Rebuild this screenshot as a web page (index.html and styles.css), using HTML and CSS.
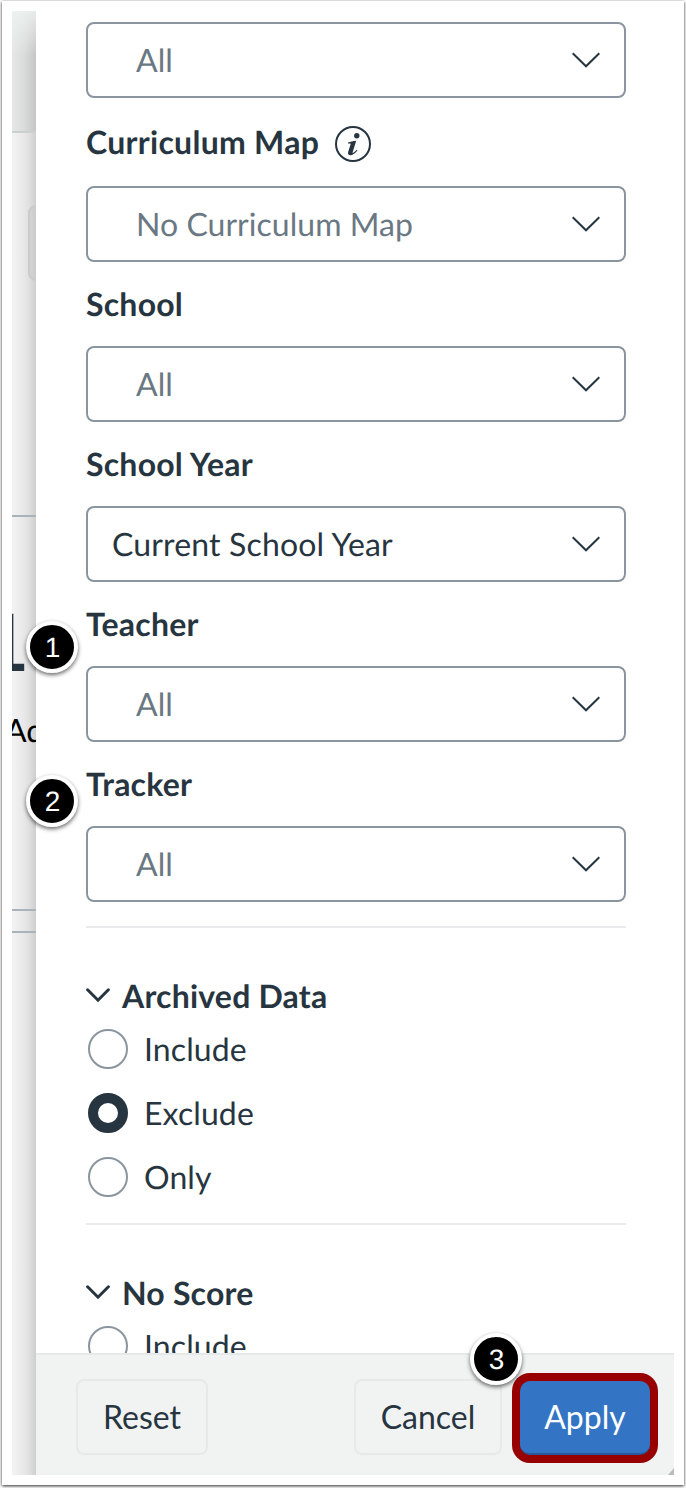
FILE: index.html
```html
<!DOCTYPE html>
<html lang="en">
<head>
    <meta charset="UTF-8">
    <meta name="viewport" content="width=device-width, initial-scale=1.0">
    <title>Filters</title>
    <link rel="stylesheet" href="styles.css">
</head>
<body>
    <div class="frame">
        <!-- Page behind the tray -->
        <div class="page">
            <div class="page-header"></div>
            <div class="page-button"></div>
            <div class="page-line line-top"></div>
            <div class="page-count">1</div>
            <div class="page-text">Ad</div>
            <div class="page-line line-card"></div>
            <div class="page-line line-next"></div>
        </div>

        <form class="tray" onsubmit="return false;">
            <div class="tray-content">
                <div class="select">
                    <span class="placeholder">All</span>
                    <svg class="arrow" viewBox="0 0 28 16"><path d="M0.7 1.2L14 14.3L27.3 1.2"/></svg>
                </div>

                <div class="label label-info">
                    Curriculum Map
                    <svg class="info" viewBox="0 0 36 36">
                        <circle cx="18" cy="18" r="17"/>
                        <circle class="dot" cx="21.8" cy="9.7" r="2.7"/>
                        <path d="M13 16.6C15.5 15.6 18 15 21.2 14.7L17.6 26.6C17.4 27.5 18.3 27.4 21.8 23.8L22.4 24.5C19.6 27.8 17.5 29.2 15.4 29.2C13.4 29.2 12.6 27.8 13.2 25.8L15.6 18.2C15.9 17.3 15.2 17.2 13 17.6Z"/>
                    </svg>
                </div>
                <div class="select">
                    <span class="placeholder">No Curriculum Map</span>
                    <svg class="arrow" viewBox="0 0 28 16"><path d="M0.7 1.2L14 14.3L27.3 1.2"/></svg>
                </div>

                <div class="label">School</div>
                <div class="select">
                    <span class="placeholder">All</span>
                    <svg class="arrow" viewBox="0 0 28 16"><path d="M0.7 1.2L14 14.3L27.3 1.2"/></svg>
                </div>

                <div class="label">School Year</div>
                <div class="select">
                    <span class="value">Current School Year</span>
                    <svg class="arrow" viewBox="0 0 28 16"><path d="M0.7 1.2L14 14.3L27.3 1.2"/></svg>
                </div>

                <div class="label">Teacher</div>
                <div class="select">
                    <span class="placeholder">All</span>
                    <svg class="arrow" viewBox="0 0 28 16"><path d="M0.7 1.2L14 14.3L27.3 1.2"/></svg>
                </div>

                <div class="label">Tracker</div>
                <div class="select">
                    <span class="placeholder">All</span>
                    <svg class="arrow" viewBox="0 0 28 16"><path d="M0.7 1.2L14 14.3L27.3 1.2"/></svg>
                </div>

                <div class="group">
                    <div class="group-title">
                        <svg class="toggle" viewBox="0 0 24 16"><path d="M1.6 1.8L12 12.2L22.4 1.8"/></svg>
                        Archived Data
                    </div>
                    <label class="option"><input type="radio" name="archived">Include</label>
                    <label class="option"><input type="radio" name="archived" checked>Exclude</label>
                    <label class="option"><input type="radio" name="archived">Only</label>
                </div>

                <div class="group">
                    <div class="group-title">
                        <svg class="toggle" viewBox="0 0 24 16"><path d="M1.6 1.8L12 12.2L22.4 1.8"/></svg>
                        No Score
                    </div>
                    <label class="option"><input type="radio" name="noscore">Include</label>
                </div>
            </div>

            <div class="tray-footer">
                <button class="btn btn-reset" type="button">Reset</button>
                <button class="btn btn-cancel" type="button">Cancel</button>
                <div class="highlight">
                    <button class="btn-apply" type="submit">Apply</button>
                </div>
                <svg class="corner" viewBox="0 0 6 7"><path d="M6 0L0 7H6Z"/></svg>
            </div>
        </form>
    </div>

    <div class="badge badge-1">1</div>
    <div class="badge badge-2">2</div>
    <div class="badge badge-3">3</div>
</body>
</html>
```

FILE: styles.css
```css
* {
    box-sizing: border-box;
}
body {
    margin: 0;
    padding: 1px 2px 3px;
    height: 1488px;
    overflow: hidden;
    position: relative;
    background-color: #fff;
    font-family: Lato, sans-serif;
    font-size: 32px;
    line-height: 40px;
    color: #273540;
    text-rendering: geometricPrecision;
}
.frame {
    display: flex;
    height: 1484px;
    padding: 10px;
    background-color: #fff;
    box-shadow: 0 1px 3px rgba(0, 0, 0, 0.85);
}

/* Page behind the tray */
.page {
    width: 24px;
    height: 1464px;
    overflow: hidden;
    background: #f3f3f3;
    background: linear-gradient(to right, #f3f3f3 0%, #e8e8e8 50%, #dedede 75%, #cecece 100%);
}
.page-header {
    height: 122px;
    border-bottom: 2px solid #cdd0d0;
    background:
        linear-gradient(to bottom, rgba(240, 244, 243, 0.8), rgba(240, 244, 243, 0) 45px),
        linear-gradient(to right, #e4e8e7 0%, #d9dcdb 50%, #c3c6c5 100%);
}
.page-button {
    width: 40px;
    height: 76px;
    margin: 72px 0 234px 16px;
    border: 2px solid #c9cccc;
    border-radius: 8px;
    background: linear-gradient(to right, #d3d5d5, #c6c8c8 8px);
}
.page-line {
    height: 2px;
    background-color: #abb2bb;
}
.page-count {
    width: 60px;
    height: 80px;
    margin: 84px 0 0 -28px;
    font-size: 77px;
    line-height: 80px;
    -webkit-text-stroke: 2px #273540;
}
.page-text {
    width: 60px;
    margin: 29px 0 0 -7px;
    color: #000;
}
.line-card {
    margin-top: 159px;
}
.line-next {
    margin-top: 20px;
}

/* Tray */
.tray {
    display: flex;
    flex-direction: column;
    width: 638px;
    height: 1464px;
    background-color: #fff;
}
.tray-content {
    flex: 1;
    min-height: 0;
    overflow: hidden;
    padding: 11px 48px 0 50px;
}
.select {
    display: flex;
    align-items: center;
    justify-content: space-between;
    width: 540px;
    height: 76px;
    padding: 0 24px;
    border: 2px solid #8b959f;
    border-radius: 8px;
}
.value {
    letter-spacing: 0.16px;
}
.placeholder {
    padding-left: 24px;
    letter-spacing: 0.04px;
    color: #6a7883;
}
.arrow {
    width: 28px;
    height: 16px;
    margin-bottom: 1px;
    fill: none;
    stroke: #273540;
    stroke-width: 2;
}
.label {
    height: 84px;
    padding-top: 22px;
    font-weight: bold;
    letter-spacing: 0.22px;
}
.label-info {
    display: flex;
    gap: 16px;
    height: 88px;
    padding-top: 24px;
    letter-spacing: 0.28px;
}
.info {
    width: 36px;
    height: 36px;
    margin-top: 4px;
    fill: #273540;
}
.info circle {
    fill: none;
    stroke: #273540;
    stroke-width: 2;
}
.info .dot {
    fill: #273540;
    stroke: none;
}
.group {
    width: 540px;
    margin-top: 24px;
    padding-top: 48px;
    border-top: 2px solid #e8eaec;
}
.group + .group {
    margin-top: 26px;
}
.group-title {
    display: flex;
    align-items: center;
    gap: 12px;
    height: 40px;
    margin-bottom: 13px;
    font-weight: bold;
    letter-spacing: 0.2px;
}
.toggle {
    width: 24px;
    height: 16px;
    fill: none;
    stroke: #273540;
    stroke-width: 3;
    stroke-linecap: round;
}
.option {
    display: flex;
    align-items: center;
    gap: 16px;
    height: 40px;
    margin-left: 2px;
    letter-spacing: 0.1px;
}
.option + .option {
    margin-top: 24px;
}
.option input {
    appearance: none;
    width: 40px;
    height: 40px;
    margin: 0;
    border: 2px solid #8b959f;
    border-radius: 50%;
    background-color: #fff;
}
.option input:checked {
    border: 10px solid #273540;
}

/* Footer */
.tray-footer {
    display: flex;
    align-items: flex-start;
    position: relative;
    height: 122px;
    padding: 18px 16px 0 40px;
    border-top: 2px solid #e6e8e9;
    background-color: #f1f3f3;
}
.btn,
.btn-apply {
    padding: 0 0 1px;
    font-family: inherit;
    font-size: 32px;
}
.btn {
    height: 76px;
    margin-top: 6px;
    border: 2px solid #e7e9e9;
    border-radius: 8px;
    background-color: #f1f3f3;
    color: #273540;
}
.btn-reset {
    width: 132px;
}
.btn-cancel {
    width: 148px;
    margin-left: auto;
}
.highlight {
    width: 146px;
    height: 90px;
    margin-left: 10px;
    padding: 8px;
    border-radius: 18px;
    background-color: #980000;
}
.btn-apply {
    width: 130px;
    height: 74px;
    border: none;
    border-bottom: 2px solid #285b9a;
    border-radius: 10px;
    background-color: #3474c4;
    color: #fff;
}
.corner {
    position: absolute;
    right: 0;
    bottom: 0;
    width: 6px;
    height: 7px;
    fill: #b9bcbc;
}

/* Numbered step markers */
.badge {
    position: absolute;
    width: 52px;
    height: 52px;
    padding-left: 1px;
    border: 4px solid #fff;
    border-radius: 50%;
    background-color: #000;
    box-shadow: 0 2px 4px rgba(0, 0, 0, 0.6);
    color: #fff;
    font-family: "Liberation Sans", sans-serif;
    font-size: 28px;
    line-height: 46px;
    text-align: center;
}
.badge-1 {
    left: 26px;
    top: 621px;
}
.badge-2 {
    left: 26px;
    top: 775px;
}
.badge-3 {
    left: 470px;
    top: 1333px;
}
```
